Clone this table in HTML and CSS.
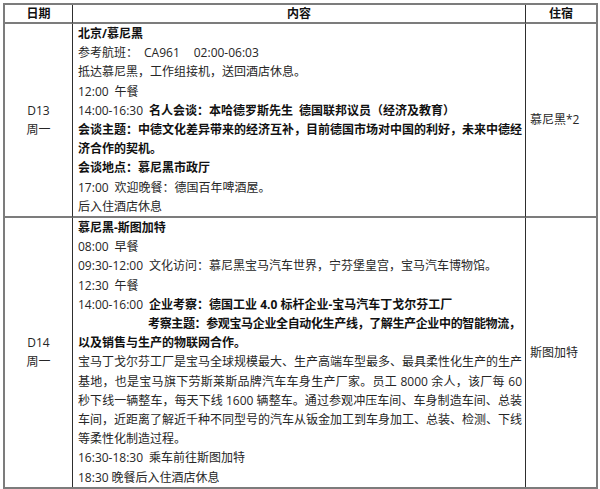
FILE: index.html
```html
<!DOCTYPE html>
<html lang="zh-CN">
<head>
<meta charset="utf-8">
<title>行程安排</title>
<link rel="stylesheet" href="styles.css">
</head>
<body>
<table class="plan">
  <colgroup>
    <col class="c-date">
    <col class="c-body">
    <col class="c-stay">
  </colgroup>
  <thead>
    <tr>
      <th>日期</th>
      <th>内容</th>
      <th class="last">住宿</th>
    </tr>
  </thead>
  <tbody>
    <tr class="r1">
      <td class="date"><div>D13</div><div>周一</div></td>
      <td class="body">
        <div class="ln"><b>北京/慕尼黑</b></div>
        <div class="ln">参考航班：<span class="fl1">CA961</span><span class="fl2">02:00-06:03</span></div>
        <div class="ln">抵达慕尼黑，工作组接机，送回酒店休息。</div>
        <div class="ln"><span class="t">12:00</span>午餐</div>
        <div class="ln"><span class="t">14:00-16:30</span><b>名人会谈：本哈德罗斯先生<span class="gap">德国联邦议员（经济及教育）</span></b></div>
        <div class="ln j"><b>会谈主题：中德文化差异带来的经济互补，目前德国市场对中国的利好，未来中德经</b></div>
        <div class="ln"><b>济合作的契机。</b></div>
        <div class="ln"><b>会谈地点：慕尼黑市政厅</b></div>
        <div class="ln"><span class="t">17:00</span>欢迎晚餐：德国百年啤酒屋。</div>
        <div class="ln">后入住酒店休息</div>
      </td>
      <td class="stay last">慕尼黑*2</td>
    </tr>
    <tr class="r2">
      <td class="date"><div>D14</div><div>周一</div></td>
      <td class="body">
        <div class="ln"><b>慕尼黑-斯图加特</b></div>
        <div class="ln"><span class="t">08:00</span>早餐</div>
        <div class="ln"><span class="t">09:30-12:00</span>文化访问：慕尼黑宝马汽车世界，宁芬堡皇宫，宝马汽车博物馆。</div>
        <div class="ln"><span class="t">12:30</span>午餐</div>
        <div class="ln"><span class="t">14:00-16:00</span><b>企业考察：德国工业 4.0 标杆企业-宝马汽车丁戈尔芬工厂</b></div>
        <div class="ln ind"><b>考察主题：参观宝马企业全自动化生产线，了解生产企业中的智能物流，</b></div>
        <div class="ln"><b>以及销售与生产的物联网合作。</b></div>
        <div class="ln j">宝马丁戈尔芬工厂是宝马全球规模最大、生产高端车型最多、最具柔性化生产的生产</div>
        <div class="ln j">基地，也是宝马旗下劳斯莱斯品牌汽车车身生产厂家。员工 8000 余人，该厂每 60</div>
        <div class="ln j">秒下线一辆整车，每天下线 1600 辆整车。通过参观冲压车间、车身制造车间、总装</div>
        <div class="ln j">车间，近距离了解近千种不同型号的汽车从钣金加工到车身加工、总装、检测、下线</div>
        <div class="ln">等柔性化制造过程。</div>
        <div class="ln"><span class="t">16:30-18:30</span>乘车前往斯图加特</div>
        <div class="ln"><span class="t s">18:30</span>晚餐后入住酒店休息</div>
      </td>
      <td class="stay last">斯图加特</td>
    </tr>
  </tbody>
</table>
</body>
</html>
```
FILE: styles.css
```css
html, body {
  margin: 0;
  padding: 0;
  background: #ffffff;
}
body {
  padding: 3px 0 0 3px;
  font-family: "Open Sans", "Noto Sans CJK SC", sans-serif;
  font-size: 12px;
  color: #262626;
}
.plan {
  table-layout: fixed;
  width: 595px;
  border-collapse: separate;
  border-spacing: 0;
  border: 2px solid #7c7c7c;
}
.c-date { width: 68px; }
.c-body { width: 453px; }
.c-stay { width: 70px; }

.plan th,
.plan td {
  padding: 0;
  border-right: 1px solid #2e2e2e;
  border-bottom: 2px solid #7c7c7c;
}
.plan th.last,
.plan td.last {
  border-right: none;
}
.plan tr.r2 td {
  border-bottom: none;
}
.plan th {
  height: 17px;
  line-height: 17px;
  font-weight: bold;
  color: #111;
  text-align: center;
}
.plan td {
  line-height: 19.2px;
  vertical-align: middle;
}
.date {
  text-align: center;
}
.stay {
  padding-left: 4px !important;
}
.body {
  vertical-align: top !important;
  padding: 0 3px 0 5px !important;
}
.ln {
  white-space: nowrap;
}
.ln b {
  color: #111;
}
.j {
  text-align: justify;
  text-align-last: justify;
  white-space: normal;
}
.ind {
  padding-left: 70px;
  letter-spacing: -0.36px;
}
.t {
  margin-right: 6px;
}
.t.s {
  margin-right: 3px;
}
.fl1 {
  margin-left: 6px;
}
.fl2 {
  margin-left: 14px;
}
.gap {
  margin-left: 6px;
}
```
